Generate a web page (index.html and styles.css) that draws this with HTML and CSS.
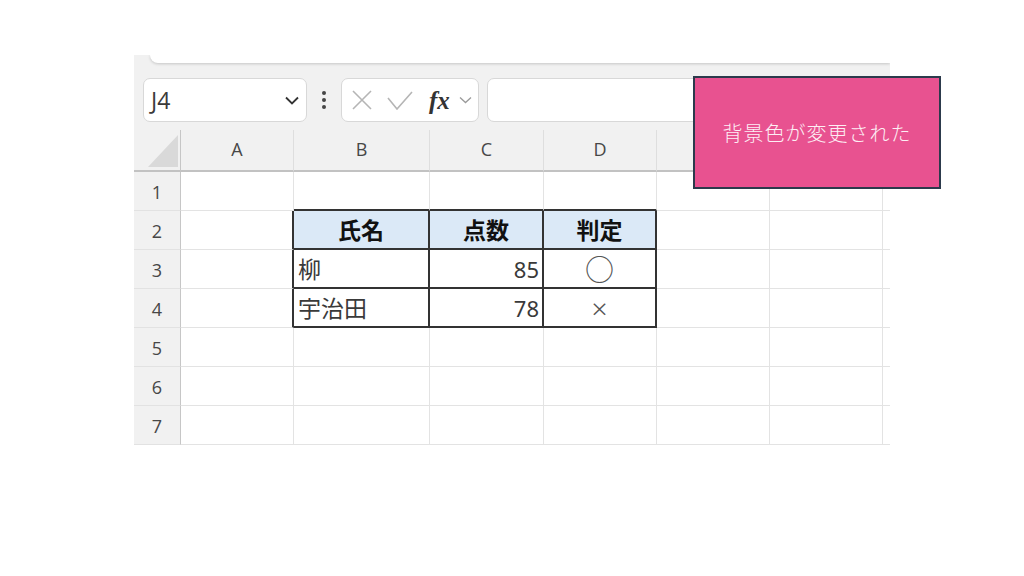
FILE: index.html
```html
<!DOCTYPE html>
<html lang="ja">
<head>
<meta charset="utf-8">
<title>Excel</title>
<link rel="stylesheet" href="styles.css">
</head>
<body>
<div class="stage">
  <div class="excel">
    <div class="ribbon-edge"></div>
    <div class="fbar">
      <div class="namebox">
        <span class="ref">J4</span>
        <svg class="chev" width="14" height="9" viewBox="0 0 14 9"><path d="M1 1.5L7 7.5L13 1.5" stroke="#333" stroke-width="1.8" fill="none"/></svg>
      </div>
      <div class="more"><span class="dot"></span><span class="dot"></span><span class="dot"></span></div>
      <div class="fxbox">
        <svg class="ic-x" width="20" height="20" viewBox="0 0 20 20"><path d="M1 1L19 19M19 1L1 19" stroke="#b5b5b5" stroke-width="1.6" fill="none"/></svg>
        <svg class="ic-ok" width="26" height="19" viewBox="0 0 26 19"><path d="M1 7L10 18L25 1" stroke="#b5b5b5" stroke-width="1.6" fill="none"/></svg>
        <span class="fx">fx</span>
        <svg class="ic-dd" width="13" height="8" viewBox="0 0 13 8"><path d="M1 1.5L6.5 6.5L12 1.5" stroke="#9a9a9a" stroke-width="1.3" fill="none"/></svg>
      </div>
      <div class="input"></div>
    </div>
    <div class="grid">
      <div class="corner"><svg width="47" height="41" viewBox="0 0 47 41"><polygon points="14,37 44,37 44,5" fill="#d9d9d9"/></svg></div>
      <div class="ch">A</div><div class="ch">B</div><div class="ch">C</div><div class="ch">D</div><div class="ch"></div><div class="ch"></div><div class="ch"></div>

      <div class="rh">1</div>
      <div class="c"></div><div class="c above"></div><div class="c above"></div><div class="c above"></div><div class="c"></div><div class="c"></div><div class="c"></div>

      <div class="rh">2</div>
      <div class="c left"></div><div class="c tb hd">氏名</div><div class="c tb hd">点数</div><div class="c tb hd">判定</div><div class="c"></div><div class="c"></div><div class="c"></div>

      <div class="rh">3</div>
      <div class="c left"></div><div class="c tb">柳</div><div class="c tb num">85</div><div class="c tb ctr maru">○</div><div class="c"></div><div class="c"></div><div class="c"></div>

      <div class="rh">4</div>
      <div class="c left"></div><div class="c tb">宇治田</div><div class="c tb num">78</div><div class="c tb ctr batsu">×</div><div class="c"></div><div class="c"></div><div class="c"></div>

      <div class="rh">5</div>
      <div class="c"></div><div class="c"></div><div class="c"></div><div class="c"></div><div class="c"></div><div class="c"></div><div class="c"></div>

      <div class="rh">6</div>
      <div class="c"></div><div class="c"></div><div class="c"></div><div class="c"></div><div class="c"></div><div class="c"></div><div class="c"></div>

      <div class="rh">7</div>
      <div class="c"></div><div class="c"></div><div class="c"></div><div class="c"></div><div class="c"></div><div class="c"></div><div class="c"></div>
    </div>
  </div>
  <div class="callout">背景色が変更された</div>
</div>
</body>
</html>
```

FILE: styles.css
```css
* { box-sizing: border-box; }
html, body { margin: 0; padding: 0; background: #fff; }
body { width: 1024px; height: 576px; overflow: hidden; font-family: "Open Sans", "Noto Sans CJK JP", sans-serif; }

.stage { position: relative; width: 1024px; height: 576px; padding: 55px 0 0 134px; }

.excel {
  width: 756px;
  height: 390px;
  background: #f1f1f1;
  overflow: hidden;
}

.ribbon-edge {
  height: 8px;
  margin-left: 16px;
  background: #fff;
  border-bottom-left-radius: 8px;
  box-shadow: 0 1px 3px rgba(0,0,0,0.18);
}

.fbar {
  height: 67px;
  display: flex;
  align-items: flex-start;
  padding: 15px 0 0 9px;
}

.namebox {
  width: 164px;
  height: 44px;
  background: #fff;
  border: 1px solid #d8d8d8;
  border-radius: 7px;
  display: flex;
  align-items: center;
  justify-content: space-between;
  padding: 0 7px 0 7px;
}
.ref { font-size: 23px; color: #3a3a3a; font-family: "Open Sans", sans-serif; }

.more {
  width: 34px;
  height: 44px;
  display: flex;
  flex-direction: column;
  align-items: center;
  justify-content: center;
  gap: 3px;
}
.dot { width: 4px; height: 4px; border-radius: 50%; background: #454545; }

.fxbox {
  width: 138px;
  height: 44px;
  background: #fff;
  border: 1px solid #d8d8d8;
  border-radius: 7px;
  display: flex;
  align-items: center;
  padding-left: 10px;
}
.ic-ok { margin-left: 15px; }
.fx {
  margin-left: 16px;
  font-family: "Liberation Serif", serif;
  font-style: italic;
  font-weight: bold;
  font-size: 25px;
  color: #333;
  line-height: 1;
}
.ic-dd { margin-left: 9px; }

.input {
  flex: 1;
  height: 44px;
  margin-left: 8px;
  background: #fff;
  border: 1px solid #d8d8d8;
  border-radius: 7px;
}

.grid {
  display: grid;
  grid-template-columns: 47px 113px 136px 114px 113px 113px 113px 7px;
  grid-template-rows: 42px repeat(7, 39px);
  background: #fff;
}

.corner {
  background: #f1f1f1;
  border-right: 1px solid #c6c6c6;
  border-bottom: 2px solid #c2c2c2;
}
.corner svg { display: block; }

.ch {
  background: #f1f1f1;
  border-right: 1px solid #dedede;
  border-bottom: 2px solid #c2c2c2;
  display: flex;
  align-items: center;
  justify-content: center;
  font-size: 18px;
  color: #474747;
  padding-bottom: 3px;
}

.rh {
  background: #f1f1f1;
  border-right: 1px solid #c6c6c6;
  border-bottom: 1px solid #e2e2e2;
  display: flex;
  align-items: center;
  justify-content: center;
  font-size: 18px;
  color: #474747;
  padding-top: 2px;
}

.c {
  border-right: 1px solid #e3e3e3;
  border-bottom: 1px solid #e3e3e3;
  display: flex;
  align-items: center;
  padding: 0 4px;
  font-family: "Noto Sans CJK JP", sans-serif;
  font-size: 23px;
  color: #3a3a3a;
  white-space: nowrap;
  line-height: 1;
}

.above { border-bottom: 2px solid #333; }
.left { border-right: 2px solid #333; }
.tb { border-right: 2px solid #333; border-bottom: 2px solid #333; }

.hd {
  background: #dbe9f7;
  justify-content: center;
  font-weight: bold;
  color: #111;
}
.num {
  justify-content: flex-end;
  padding-right: 3px;
  font-family: "Noto Sans", sans-serif;
  font-size: 22px;
}
.ctr { justify-content: center; }
.maru { font-size: 29px; color: #555; }
.batsu { font-family: "Noto Sans", sans-serif; font-size: 28px; color: #555; font-weight: 300; }

.callout {
  position: absolute;
  left: 693px;
  top: 76px;
  width: 248px;
  height: 113px;
  background: #e85290;
  border: 2px solid #2c3a4c;
  display: flex;
  align-items: center;
  justify-content: center;
  font-family: "Noto Sans CJK JP", sans-serif;
  font-weight: 300;
  font-size: 20px;
  letter-spacing: 1px;
  color: #fdeef4;
}
```
